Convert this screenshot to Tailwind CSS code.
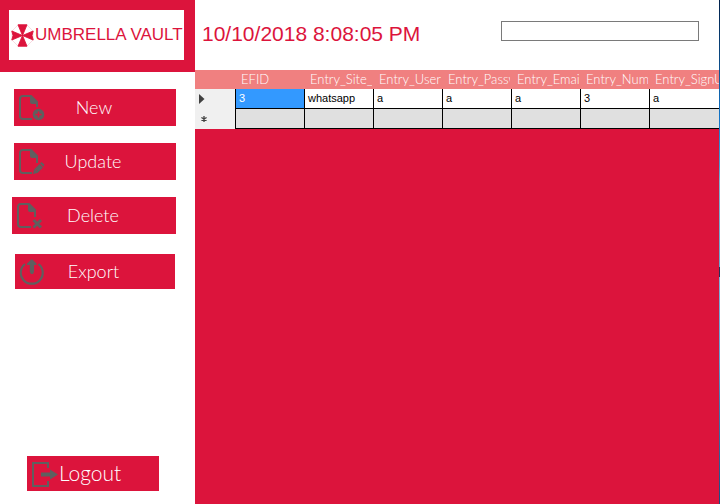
<!DOCTYPE html>
<html lang="en">
<head>
<meta charset="utf-8">
<title>Umbrella Vault</title>
<script src="https://cdn.jsdelivr.net/npm/@tailwindcss/browser@4"></script>
</head>
<body class="flex min-h-screen bg-white font-['Liberation_Sans',Arial,sans-serif]">
  <aside class="flex w-[195px] shrink-0 flex-col">
    <header class="h-[72px] bg-[#dc143c] pt-[10px] pr-[11px] pl-[9px]">
      <div class="flex h-[50px] items-center bg-white pl-[2px] text-[#dc143c]">
        <svg class="size-[23px] shrink-0" viewBox="0 0 23 23" aria-hidden="true">
          <path d="M7 1H16L22 7V16L16 22H7L1 16V7Z" fill="#fff" stroke="#f3c3cc" stroke-width=".6"/>
          <path d="M11.500 11.500L7 .800H16ZM11.500 11.500L22.200 7L21 11.500L22.200 16ZM11.500 11.500L16 22.200H7ZM11.500 11.500L.800 16L2 11.500L.800 7Z" fill="#dc143c" stroke="#dc143c" stroke-width=".9"/>
        </svg>
        <h1 class="whitespace-nowrap pl-px text-[17px] leading-[20px]">UMBRELLA VAULT</h1>
      </div>
    </header>
    <nav class="flex grow flex-col items-start font-['Century_Gothic',Lato,sans-serif] text-[18px] font-light text-white" aria-label="Entries">
      <button type="button" class="relative mt-[17px] ml-[14px] h-[37px] w-[162px] bg-[#dc143c] text-center">
        <svg class="absolute top-[5px] left-[4px] size-[28px]" viewBox="0 0 28 28" fill="none" aria-hidden="true">
          <path d="M14 25H5Q2 25 2 22V5Q2 2 5 2H13L19 8V13" stroke="#5f5f5f" stroke-width="2"/>
          <path d="M12 1L20 9V10H14Q12 10 12 8Z" fill="#5f5f5f"/>
          <circle cx="20.500" cy="20.500" r="5.800" fill="#5f5f5f"/>
          <path d="M20.500 17.500V23.500M17.500 20.500H23.500" stroke="#dc143c" stroke-width="1.500"/>
        </svg>
        <span class="block pr-[2px]">New</span>
      </button>
      <button type="button" class="relative mt-[17px] ml-[14px] h-[37px] w-[162px] bg-[#dc143c] text-center">
        <svg class="absolute top-[5px] left-[4px] size-[28px]" viewBox="0 0 28 28" fill="none" aria-hidden="true">
          <path d="M14 25H5Q2 25 2 22V5Q2 2 5 2H13L19 8V15" stroke="#5f5f5f" stroke-width="2"/>
          <path d="M12 1L20 9V10H14Q12 10 12 8Z" fill="#5f5f5f"/>
          <path d="M15 26L16 21.500L21.500 16L25 19.500L19.500 25ZM22 15.500L23.500 14L26.500 16.500L25.500 18.800Z" fill="#5f5f5f"/>
          <path d="M17.500 21.500L19 23" stroke="#dc143c" stroke-width=".6"/>
        </svg>
        <span class="block pr-[4px]">Update</span>
      </button>
      <button type="button" class="relative mt-[17px] ml-[12px] h-[37px] w-[164px] bg-[#dc143c] text-center">
        <svg class="absolute top-[5px] left-[4px] size-[28px]" viewBox="0 0 28 28" fill="none" aria-hidden="true">
          <path d="M15 25H5Q2 25 2 22V5Q2 2 5 2H13L19 8V15" stroke="#5f5f5f" stroke-width="2"/>
          <path d="M12 1L20 9V10H14Q12 10 12 8Z" fill="#5f5f5f"/>
          <path d="M17.500 18L25 25.500M25 18L17.500 25.500" stroke="#5f5f5f" stroke-width="3"/>
        </svg>
        <span class="block pr-[2px]">Delete</span>
      </button>
      <button type="button" class="relative mt-[20px] ml-[15px] h-[35px] w-[160px] bg-[#dc143c] text-center">
        <svg class="absolute top-[5px] left-[4px] size-[28px]" viewBox="0 0 28 28" fill="none" aria-hidden="true">
          <path d="M6 5A11 11 0 1 0 19.500 5" stroke="#5f5f5f" stroke-width="2.200"/>
          <path d="M12.800 0L17.500 4.500V6H15V13L14 15H12L10.800 13V6H8V4.500Z" fill="#5f5f5f"/>
        </svg>
        <span class="block pr-[3px]">Export</span>
      </button>
      <button type="button" class="mt-auto mb-[13px] ml-[27px] flex h-[35px] w-[132px] items-center bg-[#dc143c] pl-[4px] text-[21px] leading-[32px]">
        <svg class="size-[28px] shrink-0" viewBox="0 0 28 28" fill="none" aria-hidden="true">
          <path d="M17 8V3H2V26H17V21" stroke="#5f5f5f" stroke-width="2"/>
          <path d="M10 12.500H19V9.500L27 14.500L19 19.500V16.500H10Z" fill="#5f5f5f"/>
        </svg>
        <span class="pb-[2px]">Logout</span>
      </button>
    </nav>
  </aside>
  <main class="flex min-w-0 grow flex-col bg-[#dc143c]">
    <header class="flex h-[70px] items-start justify-between bg-white pr-[20px] pl-[7px]">
      <time datetime="2018-10-10T20:08:05" class="pt-[22px] text-[21px] leading-[24px] whitespace-nowrap text-[#dc143c]">10/10/2018 8:08:05 PM</time>
      <input type="text" aria-label="Search" class="mt-[21px] h-[20px] w-[198px] border border-[#7a7a7a] bg-white px-1 text-[11px] outline-none">
    </header>
    <table class="w-full table-fixed border-separate border-spacing-0 text-left text-[11px] text-black">
      <colgroup><col class="w-[41px]"><col><col><col><col><col><col><col></colgroup>
      <thead class="bg-[#f08080] font-['Century_Gothic',Lato,sans-serif] text-[13px] leading-[19px] text-white">
        <tr class="h-[19px]">
          <td class="p-0"></td>
          <th scope="col" class="py-0 pr-[2px] pl-[5px] font-light whitespace-nowrap"><div class="overflow-hidden">EFID</div></th>
          <th scope="col" class="py-0 pr-[2px] pl-[5px] font-light whitespace-nowrap"><div class="overflow-hidden">Entry_Site_</div></th>
          <th scope="col" class="py-0 pr-[2px] pl-[5px] font-light whitespace-nowrap"><div class="overflow-hidden">Entry_Usern</div></th>
          <th scope="col" class="py-0 pr-[2px] pl-[5px] font-light whitespace-nowrap"><div class="overflow-hidden">Entry_Passw</div></th>
          <th scope="col" class="py-0 pr-[2px] pl-[5px] font-light whitespace-nowrap"><div class="overflow-hidden">Entry_Emai</div></th>
          <th scope="col" class="py-0 pr-[2px] pl-[5px] font-light whitespace-nowrap"><div class="overflow-hidden">Entry_Num</div></th>
          <th scope="col" class="py-0 pl-[5px] font-light whitespace-nowrap"><div class="overflow-hidden">Entry_SignU</div></th>
        </tr>
      </thead>
      <tbody class="leading-[19px]">
        <tr class="h-[20px] bg-white">
          <th scope="row" aria-label="Current row" class="border-r border-black bg-[#f0f0f0] py-0 pl-[4px]"><svg class="h-[10px] w-[6px]" viewBox="0 0 6 10" aria-hidden="true"><path d="M0 0L5.500 5L0 10Z" fill="#404040"/></svg></th>
          <td class="border-r border-b border-black bg-[#3399ff] py-0 pl-[3px] text-white">3</td>
          <td class="border-r border-b border-black py-0 pl-[3px]">whatsapp</td>
          <td class="border-r border-b border-black py-0 pl-[3px]">a</td>
          <td class="border-r border-b border-black py-0 pl-[3px]">a</td>
          <td class="border-r border-b border-black py-0 pl-[3px]">a</td>
          <td class="border-r border-b border-black py-0 pl-[3px]">3</td>
          <td class="border-b border-black py-0 pl-[3px]">a</td>
        </tr>
        <tr class="h-[20px] bg-[#e0e0e0]">
          <th scope="row" aria-label="New row" class="border-r border-black bg-[#f0f0f0] py-0 pl-[6px]"><svg class="size-[6px]" viewBox="0 0 6 6" aria-hidden="true"><path d="M3 0V6M.400 1.500L5.600 4.500M.400 4.500L5.600 1.500" stroke="#404040" stroke-width="1.300"/></svg></th>
          <td class="border-r border-b border-black p-0"></td>
          <td class="border-r border-b border-black p-0"></td>
          <td class="border-r border-b border-black p-0"></td>
          <td class="border-r border-b border-black p-0"></td>
          <td class="border-r border-b border-black p-0"></td>
          <td class="border-r border-b border-black p-0"></td>
          <td class="border-b border-black p-0"></td>
        </tr>
      </tbody>
    </table>
  </main>
  <div class="w-px shrink-0 bg-[linear-gradient(to_bottom,#00204a_0%,#0a4a85_12%,#1277cc_24%,#4a9bd0_33%,#7fb2d0_36%,#6aa5cc_53%,#27305a_53%,#27305a_55%,#7db0d8_55%,#5f9ed0_72%,#3f78b0_80%,#1d4a80_100%)]"></div>
</body>
</html>
